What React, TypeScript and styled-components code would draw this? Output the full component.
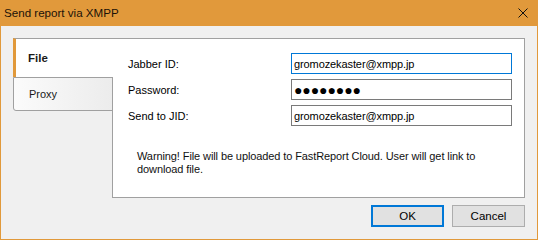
import styled, { createGlobalStyle } from 'styled-components'

const GlobalStyle = createGlobalStyle`
  html, body {
    margin: 0;
    padding: 0;
    background: #f0f0f0;
  }
  * {
    box-sizing: border-box;
  }
`

const accent = '#e1993b'

const Window = styled.div`
  width: 538px;
  height: 240px;
  display: flex;
  flex-direction: column;
  border: 1px solid ${accent};
  border-top: none;
  background: #f0f0f0;
  font-family: 'Liberation Sans', Arial, sans-serif;
  font-size: 11px;
  color: #000;
`

const TitleBar = styled.div`
  height: 26px;
  flex-shrink: 0;
  display: flex;
  align-items: center;
  justify-content: space-between;
  background: ${accent};
  padding: 0 10px 1px 4px;
  margin: 0 -1px;
`

const Title = styled.span`
  font-size: 11.6px;
  color: #1b1208;
`

const CloseIcon = styled.svg`
  width: 10px;
  height: 10px;
  display: block;
`

const Body = styled.div`
  flex: 1;
  display: flex;
  flex-direction: column;
  padding: 12px 12px 0 12px;
`

const Main = styled.div`
  display: flex;
  height: 160px;
`

const TabList = styled.div`
  width: 100px;
  margin-right: -1px;
  position: relative;
  z-index: 1;
  display: flex;
  flex-direction: column;
`

const Tab = styled.div<{ $active?: boolean }>`
  display: flex;
  align-items: center;
  color: #1a1a1a;
  ${({ $active }) =>
    $active
      ? `
    height: 39px;
    background: #fff;
    border-top: 1px solid #a0a0a0;
    border-left: 3px solid ${accent};
    padding-left: 12px;
    padding-bottom: 1px;
    font-weight: bold;
    font-size: 11.5px;
  `
      : `
    height: 34px;
    background: linear-gradient(to right, #fbfbfb, #ececec);
    border: 1px solid #a0a0a0;
    border-bottom-left-radius: 3px;
    padding-left: 15px;
    font-size: 11px;
  `}
`

const Panel = styled.div`
  flex: 1;
  background: #fff;
  border: 1px solid #a0a0a0;
  padding: 14px 0 0 15px;
`

const Form = styled.div`
  display: grid;
  grid-template-columns: 163px 221px;
  row-gap: 5px;
  align-items: center;
`

const Label = styled.label`
  font-size: 11px;
`

const Input = styled.div<{ $focused?: boolean }>`
  height: 21px;
  border: 1px solid ${({ $focused }) => ($focused ? '#0078d7' : '#7a7a7a')};
  display: flex;
  align-items: center;
  padding: 0 2px;
  font-size: 11px;
  letter-spacing: -0.1px;
  white-space: nowrap;
`

const Dots = styled.span`
  font-size: 14px;
  line-height: 1;
`

const Warning = styled.p`
  margin: 24px 0 0 9px;
  width: 350px;
  line-height: 13px;
  font-size: 11px;
  letter-spacing: -0.1px;
  color: #111;
`

const ButtonRow = styled.div`
  display: flex;
  justify-content: flex-end;
  gap: 8px;
  margin-top: 7px;
`

const Button = styled.button<{ $default?: boolean }>`
  width: 73px;
  height: 22px;
  background: #e1e1e1;
  border: ${({ $default }) => ($default ? '2px solid #0078d7' : '1px solid #adadad')};
  font-family: inherit;
  font-size: 11.5px;
  color: #000;
  padding: 0;
`

export default function App() {
  return (
    <>
      <GlobalStyle />
      <Window>
        <TitleBar>
          <Title>Send report via XMPP</Title>
          <CloseIcon viewBox="0 0 10 10">
            <path d="M0.5 0.5 L9.5 9.5 M9.5 0.5 L0.5 9.5" stroke="#111" strokeWidth="1" fill="none" />
          </CloseIcon>
        </TitleBar>
        <Body>
          <Main>
            <TabList>
              <Tab $active>File</Tab>
              <Tab>Proxy</Tab>
            </TabList>
            <Panel>
              <Form>
                <Label>Jabber ID:</Label>
                <Input $focused>gromozekaster@xmpp.jp</Input>
                <Label>Password:</Label>
                <Input>
                  <Dots>●●●●●●●●</Dots>
                </Input>
                <Label>Send to JID:</Label>
                <Input>gromozekaster@xmpp.jp</Input>
              </Form>
              <Warning>
                Warning! File will be uploaded to FastReport Cloud. User will get link to download file.
              </Warning>
            </Panel>
          </Main>
          <ButtonRow>
            <Button $default>OK</Button>
            <Button>Cancel</Button>
          </ButtonRow>
        </Body>
      </Window>
    </>
  )
}
